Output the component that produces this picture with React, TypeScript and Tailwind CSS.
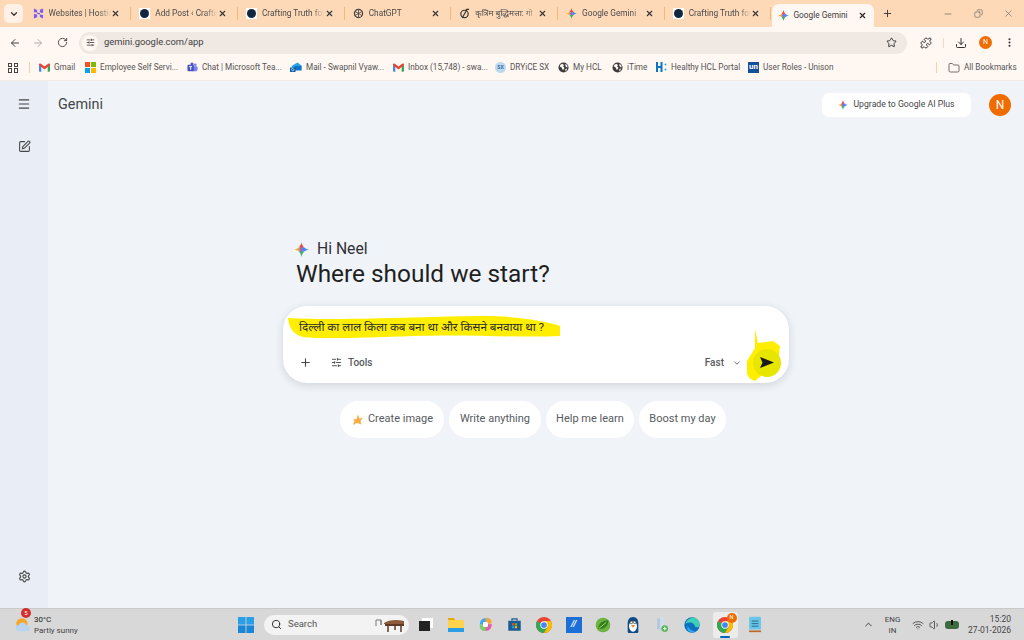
import React from "react";
import { ArrowLeft, ArrowRight, RotateCw, X, Plus, Minus, Star, Download, MoreVertical, Menu, SquarePen, Settings, ChevronDown, ChevronUp, Search, Wifi, Volume1, Folder, SlidersHorizontal, Puzzle, Copy } from "lucide-react";

const STAR = "M12 0C12.8 6.6 17.4 11.2 24 12C17.4 12.8 12.8 17.4 12 24C11.2 17.4 6.6 12.8 0 12C6.6 11.2 11.2 6.6 12 0Z";

function Spark({ size = 12 }: { size?: number }) {
  return (
    <svg width={size} height={size} viewBox="0 0 24 24" className="shrink-0">
      <defs>
        <clipPath id="sparkclip"><path d={STAR} /></clipPath>
      </defs>
      <g clipPath="url(#sparkclip)">
        <path d="M12 12L0 0H24Z" fill="#ea4a3f" />
        <path d="M12 12L24 0V24Z" fill="#3f8df2" />
        <path d="M12 12L24 24H0Z" fill="#36b36a" />
        <path d="M12 12L0 24V0Z" fill="#f7a928" />
        <circle cx="12" cy="12" r="3.500" fill="#8b6fd8" />
      </g>
    </svg>
  );
}

function HostingerIcon() {
  return (
    <svg width="11" height="11" viewBox="0 0 24 24" className="shrink-0" fill="#7a5cf0">
      <path d="M2 1l7 3.500V10l-7-1zM15 4l7-3v10l-7-1zM2 13l7 1v6l-7 3zM15 14l7 1v8l-7-3.500zM9 10l6 1v3l-6-1z" />
    </svg>
  );
}
function DotIcon() {
  return (
    <span className="flex h-[11px] w-[11px] shrink-0 items-center justify-center bg-white">
      <span className="h-[9px] w-[9px] rounded-full bg-[#12263f]" />
    </span>
  );
}
function GptIcon() {
  return (
    <svg width="11" height="11" viewBox="0 0 24 24" className="shrink-0" fill="none" stroke="#444" strokeWidth="2.600">
      <circle cx="12" cy="12" r="9" />
      <path d="M12 3v18M4 7.500l16 9M20 7.500l-16 9" strokeWidth="1.800" />
    </svg>
  );
}
function LoopIcon() {
  return (
    <svg width="11" height="11" viewBox="0 0 24 24" className="shrink-0" fill="none" stroke="#333" strokeWidth="2.500">
      <circle cx="12" cy="13" r="8" />
      <path d="M7 22L18 2M15 3h7" />
    </svg>
  );
}

const tabs = [
  { icon: <HostingerIcon />, t: "Websites | Hostir" },
  { icon: <DotIcon />, t: "Add Post ‹ Craftir" },
  { icon: <DotIcon />, t: "Crafting Truth for" },
  { icon: <GptIcon />, t: "ChatGPT" },
  { icon: <LoopIcon />, t: "कृत्रिम बुद्धिमत्ता: गो" },
  { icon: <Spark size={11} />, t: "Google Gemini" },
  { icon: <DotIcon />, t: "Crafting Truth for" },
];

function Tab({ icon, t }: { icon: React.ReactNode; t: string }) {
  return (
    <div className="flex h-[13px] w-[106.700px] shrink-0 items-center border-r border-r-[#f5b876] pl-[8px] pr-[7px]">
      {icon}
      <span className="ml-[5px] w-[62px] whitespace-nowrap text-[8.300px] text-[#4a4a4a] [mask-image:linear-gradient(to_right,black_80%,transparent)]">{t}</span>
      <X size={9} strokeWidth={3} className="ml-auto mr-[3px] text-[#333]" />
    </div>
  );
}

function GmailIcon() {
  return (
    <svg width="11" height="9" viewBox="0 0 24 18" className="shrink-0">
      <path d="M0 3v13a2 2 0 002 2h3V7z" fill="#4285f4" />
      <path d="M24 3v13a2 2 0 01-2 2h-3V7z" fill="#34a853" />
      <path d="M5 8L0 4V2.500C0 .500 2.300-.7 4 .6L12 7l8-6.400c1.700-1.300 4-.1 4 1.900V4l-5 4-7 5.500z" fill="#ea4335" />
    </svg>
  );
}
function MsIcon() {
  return (
    <span className="grid h-[11px] w-[11px] shrink-0 grid-cols-2 gap-[0.5px]">
      <span className="bg-[#f25022]" /><span className="bg-[#7fba00]" /><span className="bg-[#00a4ef]" /><span className="bg-[#ffb900]" />
    </span>
  );
}
function TeamsIcon() {
  return (
    <svg width="11" height="11" viewBox="0 0 24 24" className="shrink-0">
      <circle cx="18" cy="6" r="3" fill="#7b83eb" /><circle cx="11" cy="4.500" r="3.500" fill="#5059c9" />
      <rect x="9" y="9" width="14" height="11" rx="3" fill="#7b83eb" />
      <rect x="1" y="6" width="14" height="14" rx="2" fill="#4b53bc" />
      <path d="M5 10h6M8 10v7" stroke="#fff" strokeWidth="2" />
    </svg>
  );
}
function MailIcon() {
  return (
    <svg width="12" height="11" viewBox="0 0 24 22" className="shrink-0">
      <path d="M3 8L15 1l8 6v9H8z" fill="#29a3e8" />
      <path d="M9 8l14 0v9H9z" fill="#1273c4" />
      <rect x="0" y="11" width="11" height="9" rx="1" fill="#0d5aa7" />
      <circle cx="5.500" cy="15.500" r="2.400" fill="none" stroke="#fff" strokeWidth="1.200" />
    </svg>
  );
}
function SxIcon() {
  return <span className="flex h-[11px] w-[11px] shrink-0 items-center justify-center rounded-full bg-[#bcd9ee] text-[5px] font-bold text-[#2d6da3]">SX</span>;
}
function GlobeFill() {
  return (
    <svg width="11" height="11" viewBox="0 0 24 24" className="shrink-0">
      <circle cx="12" cy="12" r="11" fill="#3d3d3d" />
      <path d="M5 6l5-2 3 3-2 3 3 2-1 4-3 1-2-5-4-2zM16 4l4 3 1 5-3-1-2-3zM16 15l4-1-2 5-2 1z" fill="#fff7f2" />
    </svg>
  );
}
function HclIcon() {
  return (
    <svg width="11" height="12" viewBox="0 0 22 24" className="shrink-0">
      <path d="M0 2h4v8h5V2h4v20H9v-8H4v8H0z" fill="#0b76c5" />
      <circle cx="19" cy="7" r="2" fill="#25a9e0" /><circle cx="19" cy="17" r="2" fill="#25a9e0" />
    </svg>
  );
}
function UnIcon() {
  return <span className="flex h-[11px] w-[11px] shrink-0 items-center justify-center bg-[#14509a] text-[8px] font-bold leading-none text-white">un</span>;
}

const bookmarks = [
  { icon: <GmailIcon />, t: "Gmail", span: 46 },
  { icon: <MsIcon />, t: "Employee Self Servi...", span: 102 },
  { icon: <TeamsIcon />, t: "Chat | Microsoft Tea...", span: 103 },
  { icon: <MailIcon />, t: "Mail - Swapnil Vyaw...", span: 103 },
  { icon: <GmailIcon />, t: "Inbox (15,748) - swa...", span: 102 },
  { icon: <SxIcon />, t: "DRYiCE SX", span: 63 },
  { icon: <GlobeFill />, t: "My HCL", span: 54 },
  { icon: <GlobeFill />, t: "iTime", span: 44 },
  { icon: <HclIcon />, t: "Healthy HCL Portal", span: 92 },
  { icon: <UnIcon />, t: "User Roles - Unison", span: 188 },
];

function Chip({ children, w }: { children: React.ReactNode; w: string }) {
  return <div className={`flex h-[37px] items-center justify-center gap-[4px] rounded-full bg-white text-[11px] text-[#575b5f] ${w}`}>{children}</div>;
}

function Task({ children, w = "w-[29.500px]", cls = "" }: { children: React.ReactNode; w?: string; cls?: string }) {
  return <div className={`relative flex h-[26px] shrink-0 items-center justify-center ${w} ${cls}`}>{children}</div>;
}

function ChromeIcon({ size = 16 }: { size?: number }) {
  return (
    <svg width={size} height={size} viewBox="0 0 24 24">
      <circle cx="12" cy="12" r="12" fill="#ea4335" />
      <path d="M12 12L1.600 6A12 12 0 0012 24l5-6z" fill="#34a853" />
      <path d="M12 6h10.400A12 12 0 0112 24l5.200-9z" fill="#fbbc04" />
      <circle cx="12" cy="12" r="5.500" fill="#fff" /><circle cx="12" cy="12" r="4.300" fill="#4285f4" />
    </svg>
  );
}

export default function App() {
  return (
    <div className="flex h-[640px] w-[1024px] flex-col overflow-hidden bg-[#f0f4f9] font-[Roboto,'Noto_Sans',sans-serif]">
      {/* Tab strip */}
      <div className="flex h-[27px] shrink-0 items-end bg-[#fdd9b8]">
        <div className="mb-[4px] ml-[4px] flex h-[19px] w-[19px] shrink-0 items-center justify-center rounded-[5px] bg-[#fff1e6]">
          <ChevronDown size={10} strokeWidth={3} className="text-[#333]" />
        </div>
        <div className="h-full w-[1.600px] shrink-0" />
        {tabs.map((x, i) => (
          <div key={i} className="flex h-full items-center"><Tab icon={x.icon} t={x.t} /></div>
        ))}
        <div className="ml-[1px] flex h-[23px] w-[102px] shrink-0 items-center rounded-t-[7px] bg-[#fff7f2] pl-[6px] pr-[7px]">
          <Spark size={11} />
          <span className="ml-[4px] whitespace-nowrap text-[8.300px] text-[#3c3c3c]">Google Gemini</span>
          <X size={9} strokeWidth={3} className="ml-auto text-[#222]" />
        </div>
        <div className="flex h-full w-[26px] shrink-0 items-center justify-center">
          <Plus size={11} strokeWidth={2} className="text-[#333]" />
        </div>
        <div className="flex h-full flex-1 items-center justify-between pl-[43px] pr-[10px] text-[#555]">
          <Minus size={10} strokeWidth={1.500} />
          <Copy size={9} strokeWidth={1.500} className="-scale-x-100" />
          <X size={11} strokeWidth={1.200} />
        </div>
      </div>

      {/* Toolbar */}
      <div className="flex h-[28px] shrink-0 items-center bg-[#fff7f2] pl-[9px] pr-[9px] pt-[3px]">
        <ArrowLeft size={12} strokeWidth={2} className="text-[#444]" />
        <ArrowRight size={12} strokeWidth={2} className="ml-[11px] text-[#b0aeac]" />
        <RotateCw size={11} strokeWidth={2} className="ml-[13px] text-[#444]" />
        <div className="ml-[11px] flex h-[22px] w-[828px] shrink-0 items-center rounded-full bg-[#efe8e3] pl-[3px] pr-[10px]">
          <span className="flex h-[16px] w-[16px] items-center justify-center rounded-full bg-[#fff7f2]">
            <SlidersHorizontal size={9} strokeWidth={2} className="text-[#333]" />
          </span>
          <span className="ml-[6px] text-[9.400px] text-[#3f3f3f]">gemini.google.com/app</span>
          <Star size={11} strokeWidth={2} className="ml-auto text-[#333]" />
        </div>
        <Puzzle size={12} strokeWidth={2} className="ml-[13px] text-[#333]" />
        <span className="ml-[11px] h-[10px] w-px bg-[#f3d9c2]" />
        <Download size={12} strokeWidth={2} className="ml-[11px] text-[#333]" />
        <span className="ml-[12px] flex h-[13px] w-[13px] items-center justify-center rounded-full bg-[#ef6c00] text-[7px] text-white">N</span>
        <MoreVertical size={11} strokeWidth={2.500} className="ml-[12px] text-[#333]" />
      </div>

      {/* Bookmarks */}
      <div className="flex h-[26px] shrink-0 items-center border-b border-b-[#f2ebe6] bg-[#fff7f2] pl-[8px] text-[8.200px] text-[#555]">
        <span className="grid h-[10px] w-[10px] grid-cols-2 gap-[1.500px]">
          <span className="border border-[#444]" /><span className="border border-[#444]" /><span className="border border-[#444]" /><span className="border border-[#444]" />
        </span>
        <span className="ml-[11px] mr-[9px] h-[11px] w-px bg-[#f7cfa6]" />
        {bookmarks.map((b, i) => (
          <div key={i} className="flex shrink-0 items-center" style={{ width: b.span }}>
            {b.icon}
            <span className="ml-[4px] whitespace-nowrap">{b.t}</span>
          </div>
        ))}
        <span className="h-[11px] w-px bg-[#f7cfa6]" />
        <Folder size={12} strokeWidth={1.500} className="ml-[11px] text-[#444]" />
        <span className="ml-[4px] whitespace-nowrap">All Bookmarks</span>
      </div>

      {/* Main */}
      <div className="flex min-h-0 flex-1">
        <aside className="flex w-[48px] shrink-0 flex-col items-center bg-[#e9eef6] pb-[25px] pt-[16px] text-[#444746]">
          <Menu size={14} strokeWidth={2} />
          <SquarePen size={13} strokeWidth={2} className="mt-[29px]" />
          <Settings size={13} strokeWidth={2} className="mt-auto" />
        </aside>
        <main className="flex min-w-0 flex-1 flex-col">
          <header className="flex h-[47px] shrink-0 items-center pl-[10px] pr-[13px]">
            <span className="text-[14.400px] text-[#444746]">Gemini</span>
            <div className="ml-auto flex h-[24px] w-[149px] items-center justify-center gap-[5px] rounded-[7px] bg-white text-[8.700px] text-[#444746]">
              <Spark size={10} />
              <span>Upgrade to Google AI Plus</span>
            </div>
            <span className="ml-[18px] flex h-[22px] w-[22px] items-center justify-center rounded-full bg-[#ef6c00] text-[12px] text-white">N</span>
          </header>

          <div className="flex flex-col items-center pt-[110px]">
            <div className="w-[506px]">
              <div className="flex h-[22px] items-center pl-[11px] text-[15.700px] text-[#303134]">
                <Spark size={15} />
                <span className="ml-[8px]">Hi Neel</span>
              </div>
              <h1 className="ml-[13px] h-[28px] text-[24.400px] font-normal leading-[28px] text-[#1f1f1f]">Where should we start?</h1>

              <div className="relative mt-[18px] flex h-[77px] flex-col rounded-[24px] bg-white shadow-[0_2px_8px_rgba(60,64,67,0.18)]">
                <svg className="absolute left-0 top-0" width="506" height="77" viewBox="0 0 506 77" fill="#ffee00">
                  <path d="M5 12C60 15 150 10 200 10C240 10 270 17 277 20L277 30C230 32 190 28 130 30C80 32 30 33 20 31C10 28 6 22 5 12Z" />
                  <path d="M472 23L475 37L490 35L497 40L495 58L488 66L478 70L472 75L466 72L464 68L464 55L472 42Z" />
                </svg>
                <div className="relative pl-[16px] pt-[14px] text-[11.700px] leading-[15px] text-[#2b2b2b]">दिल्ली का लाल किला कब बना था और किसने बनवाया था ?</div>
                <div className="relative mt-auto flex h-[41px] items-center pl-[16px] pr-[8px]">
                  <Plus size={13} strokeWidth={2} className="text-[#444746]" />
                  <SlidersHorizontal size={11} strokeWidth={2} className="ml-[19px] text-[#444746]" />
                  <span className="ml-[6px] text-[10px] font-medium text-[#575b5f]">Tools</span>
                  <span className="ml-auto text-[10px] font-medium text-[#575b5f]">Fast</span>
                  <ChevronDown size={10} strokeWidth={2} className="ml-[8px] text-[#575b5f]" />
                  <span className="ml-[11px] flex h-[28px] w-[28px] items-center justify-center rounded-full bg-[#e6e600]">
                    <svg width="14" height="11" viewBox="0 0 14 11"><path d="M0 0L14 5.500L0 11L2.500 5.500Z" fill="#1a1a1a" /></svg>
                  </span>
                </div>
              </div>

              <div className="ml-[57px] mt-[18px] flex gap-[5px]">
                <Chip w="w-[104px] pl-[1px]">
                  <svg width="12" height="12" viewBox="0 0 24 24"><path d="M12 1l3 8 7-2-5 7 2 7-9-3-8 4 3-8-3-3 7-1z" fill="#f6ae4a" /></svg>
                  Create image
                </Chip>
                <Chip w="w-[92px]">Write anything</Chip>
                <Chip w="w-[88px]">Help me learn</Chip>
                <Chip w="w-[87px]">Boost my day</Chip>
              </div>
            </div>
          </div>
        </main>
      </div>

      {/* Taskbar */}
      <div className="flex h-[32px] shrink-0 items-center border-t border-t-[#c9c9c9] bg-[#d8d8d8] pl-[15px]">
        <div className="relative flex w-[223px] shrink-0 items-center">
          <svg width="15" height="16" viewBox="0 0 24 24" className="shrink-0">
            <circle cx="11" cy="10" r="9" fill="#f7a72b" />
            <path d="M6 22a5 5 0 010-10 7 7 0 0113 1 4.500 4.500 0 011 9z" fill="#b8d4f0" />
          </svg>
          <span className="absolute left-[6px] top-[-6px] flex h-[10px] w-[10px] items-center justify-center rounded-full bg-[#d32f2f] text-[6px] text-white">5</span>
          <div className="ml-[4px] flex flex-col whitespace-nowrap text-[8px] leading-[11px] text-[#444]">
            <span className="text-[#222]">30°C</span>
            <span>Partly sunny</span>
          </div>
        </div>

        <svg width="16" height="16" viewBox="0 0 16 16" className="shrink-0">
          <rect x="0" y="0" width="7.600" height="7.600" fill="#2a9fe6" /><rect x="8.400" y="0" width="7.600" height="7.600" fill="#2a9fe6" /><rect x="0" y="8.400" width="7.600" height="7.600" fill="#1a86d6" /><rect x="8.400" y="8.400" width="7.600" height="7.600" fill="#1a86d6" />
        </svg>
        <div className="ml-[10px] flex h-[20px] w-[145px] shrink-0 items-center rounded-full bg-[#f3f3f3] pl-[7px] pr-[4px] text-[9.500px] text-[#555]">
          <Search size={11} strokeWidth={2} className="text-[#222]" />
          <span className="ml-[6px]">Search</span>
          <svg width="32" height="16" viewBox="0 0 32 16" className="ml-auto">
            <path d="M3 3h5v5M3 3v6M8 3v5" stroke="#777" fill="none" />
            <path d="M11 6c4-3 12-4 20-2v3H11z" fill="#8d5a3c" />
            <path d="M12 7h19v2H12z" fill="#5f3a26" />
            <path d="M15 9v6M28 9v6M22 9v4" stroke="#5f3a26" strokeWidth="1.500" />
          </svg>
        </div>
        <Task w="w-[30px]" cls="ml-[2px]">
          <span className="relative block h-[13px] w-[14px]"><span className="absolute right-0 top-0 h-[10px] w-[11px] bg-white" /><span className="absolute bottom-0 left-0 h-[10px] w-[11px] bg-[#222]" /></span>
        </Task>
        <Task>
          <svg width="16" height="14" viewBox="0 0 16 14"><path d="M0 0h6l1 2H0z" fill="#e8a800" /><path d="M0 2h16v12H0z" fill="#ffd34d" /><path d="M0 10h16v4H0z" fill="#2a9fe6" /></svg>
        </Task>
        <Task>
          <svg width="15" height="15" viewBox="0 0 24 24"><path d="M3 12C3 5 7 2 12 2h5l-5 10z" fill="#3fa9f5" /><path d="M12 2h4c4 0 6 3 6 8l-10 2z" fill="#f4a63a" /><path d="M22 11c0 7-4 11-9 11H8l4-10z" fill="#e75ca6" /><path d="M3 12c-1 6 2 10 6 10h3l1-10z" fill="#7bcf6b" /><rect x="8" y="8" width="8" height="8" rx="2" fill="#fff" /></svg>
        </Task>
        <Task>
          <svg width="15" height="15" viewBox="0 0 24 24"><path d="M2 6h20v16H2z" fill="#1c5c94" /><path d="M8 6V3h8v3" fill="none" stroke="#1c5c94" strokeWidth="2" /><rect x="8" y="10" width="3.500" height="3.500" fill="#f25022" /><rect x="12.500" y="10" width="3.500" height="3.500" fill="#7fba00" /><rect x="8" y="14.500" width="3.500" height="3.500" fill="#00a4ef" /><rect x="12.500" y="14.500" width="3.500" height="3.500" fill="#ffb900" /></svg>
        </Task>
        <Task><ChromeIcon /></Task>
        <Task>
          <span className="flex h-[16px] w-[16px] items-center justify-center bg-[#1b6fd6] text-[9px] font-bold italic leading-none text-white">//</span>
        </Task>
        <Task>
          <svg width="16" height="16" viewBox="0 0 24 24"><circle cx="12" cy="12" r="11" fill="#6cb33f" /><path d="M5 18C5 9 13 5 20 5c0 9-7 14-15 13z" fill="#2f7d1d" /><path d="M6 17L17 8" stroke="#a6d96a" strokeWidth="1.500" /></svg>
        </Task>
        <Task>
          <svg width="14" height="16" viewBox="0 0 20 24"><path d="M10 0c6 0 8 5 8 10v12a2 2 0 01-2 2H4a2 2 0 01-2-2V10C2 5 4 0 10 0z" fill="#0e4c86" /><ellipse cx="10" cy="14" rx="6" ry="8" fill="#fff" /><circle cx="7.500" cy="8" r="2" fill="#fff" stroke="#222" /><circle cx="12.500" cy="8" r="2" fill="#fff" stroke="#222" /><path d="M7 12h6l-3 4z" fill="#f5811f" /></svg>
        </Task>
        <Task>
          <svg width="14" height="15" viewBox="0 0 20 22"><path d="M3 2h8v16H3z" fill="#b3c6dd" /><path d="M7 1h6v16H7z" fill="#cfdceb" /><circle cx="14" cy="17" r="5" fill="#5cb85c" /><path d="M14 14.500v5M11.500 17h5" stroke="#fff" strokeWidth="1.400" /></svg>
        </Task>
        <Task>
          <svg width="16" height="16" viewBox="0 0 24 24"><circle cx="12" cy="12" r="11.500" fill="#0c6fbf" /><path d="M2 10C4 3 12-1 18 2c4 2 6 6 5 11-1 3-6 3-7 0 0-4-8-7-14-3z" fill="#3dd0b6" /><path d="M12 23c-6 0-9-6-6-10 1 5 7 8 11 8-2 1-3 2-5 2z" fill="#2ea5f0" /></svg>
        </Task>
        <Task w="w-[25px]" cls="ml-[6px] rounded-[3px] bg-[#ececec]">
          <ChromeIcon />
          <span className="absolute right-[1px] top-[1px] flex h-[10px] w-[10px] items-center justify-center rounded-full bg-[#ef6c00] text-[5.500px] text-white">N</span>
          <span className="absolute bottom-0 h-[2px] w-[10px] rounded-full bg-[#0067c0]" />
        </Task>
        <Task w="w-[30px]" cls="ml-[2px]">
          <svg width="14" height="17" viewBox="0 0 16 20"><rect x="1" y="1" width="14" height="15" rx="1" fill="#6ac6e8" /><path d="M4 6h8M4 9h8M4 12h8" stroke="#1a5f7a" /><path d="M1 18h14" stroke="#b86a2b" strokeWidth="2" /></svg>
        </Task>

        <ChevronUp size={11} strokeWidth={2} className="ml-[93px] shrink-0 text-[#333]" />
        <div className="ml-[9px] flex w-[20px] shrink-0 flex-col items-center text-[8px] leading-[11px] text-[#444]">
          <span>ENG</span><span>IN</span>
        </div>
        <Wifi size={12} strokeWidth={1.500} className="ml-[9px] shrink-0 text-[#333]" />
        <Volume1 size={12} strokeWidth={1.500} className="ml-[5px] shrink-0 text-[#333]" />
        <svg width="14" height="9" viewBox="0 0 14 9" className="ml-[4px] shrink-0"><rect x="0" y="1" width="14" height="8" rx="3" fill="#3d6b3d" /><rect x="6" y="0" width="2" height="5" fill="#111" /></svg>
        <div className="ml-auto mr-[13px] flex flex-col items-end whitespace-nowrap text-[8.500px] leading-[11px] text-[#444]">
          <span>15:20</span><span>27-01-2026</span>
        </div>
      </div>
    </div>
  );
}
